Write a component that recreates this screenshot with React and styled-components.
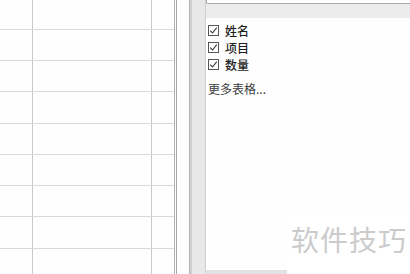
import React from "react";
import styled, { createGlobalStyle } from "styled-components";

const Global = createGlobalStyle`
  html, body { margin: 0; padding: 0; background: #ffffff; }
  body { width: 410px; height: 274px; overflow: hidden; font-family: "Noto Sans CJK SC", "Noto Sans", sans-serif; }
`;

const Page = styled.div`
  position: relative;
  display: flex;
  width: 410px;
  height: 274px;
  overflow: hidden;
  background: #ffffff;
`;

const Sheet = styled.div`
  display: flex;
  flex-direction: column;
  width: 174px;
  flex: none;
  background: #fefefe;
`;

const Row = styled.div`
  display: flex;
  flex: none;
  height: ${(p) => p.$h}px;
  border-bottom: 1px solid #d9d9d9;
`;

const Cell = styled.div`
  flex: none;
  width: ${(p) => p.$w}px;
  border-right: ${(p) => (p.$last ? "none" : "1px solid #c9c9c9")};
`;

const Gutter = styled.div`
  display: flex;
  flex: none;
  width: 31px;
  height: 100%;
`;

const Line = styled.div`
  flex: none;
  width: ${(p) => p.$w}px;
  background: ${(p) => p.$c};
`;

const Panel = styled.div`
  display: flex;
  flex-direction: column;
  flex: 1;
  height: 270px;
  border-left: 1px solid #cfcfcf;
  border-bottom: 4px solid #e2e2e2;
  background: #fefeff;
`;

const InputEdge = styled.div`
  flex: none;
  height: 3px;
  background: #ffffff;
  border-bottom: 1px solid #a8a8a8;
  border-left: 1px solid #a8a8a8;
  border-bottom-left-radius: 2px;
`;

const Strip = styled.div`
  flex: none;
  height: 14px;
  background: #ececec;
`;

const Content = styled.div`
  display: flex;
  flex-direction: column;
  padding: 4px 0 0 2px;
`;

const CheckRow = styled.label`
  display: flex;
  align-items: center;
  gap: 6px;
  height: 17px;
  font-size: 12px;
  font-weight: 500;
  line-height: 17px;
  color: #1f1f1f;
`;

const Box = styled.span`
  display: flex;
  align-items: center;
  justify-content: center;
  width: 9px;
  height: 9px;
  border: 1px solid #555555;
  background: #ffffff;
  flex: none;
`;

const More = styled.div`
  margin-top: 8px;
  font-size: 12px;
  line-height: 16px;
  color: #3c3c3c;
`;

const Watermark = styled.div`
  position: absolute;
  left: 287px;
  top: 212px;
  width: 123px;
  height: 62px;
  background: #ffffff;
  display: flex;
  align-items: flex-start;
  padding: 10px 0 0 4px;
  box-sizing: border-box;
  font-family: "Noto Sans CJK SC", sans-serif;
  font-size: 28px;
  line-height: 34px;
  letter-spacing: 1px;
  color: #cbcbcb;
  white-space: nowrap;
`;

const Check = () => (
  <svg width="9" height="9" viewBox="0 0 9 9">
    <path d="M1.2 4.6 L3.5 7 L7.8 1.6" fill="none" stroke="#3c3c3c" strokeWidth="1.1" />
  </svg>
);

const rowHeights = [29, 30, 30, 31, 30, 30, 30, 31, 30];
const cols = [32, 118, 22];

export default function App() {
  return (
    <Page>
      <Global />
      <Sheet>
        {rowHeights.map((h, i) => (
          <Row key={i} $h={h}>
            {cols.map((w, j) => (
              <Cell key={j} $w={w} $last={j === cols.length - 1} />
            ))}
          </Row>
        ))}
      </Sheet>
      <Gutter>
        <Line $w={1} $c="#b0b0b0" />
        <Line $w={1} $c="#ffffff" />
        <Line $w={1} $c="#a6a6a6" />
        <Line $w={12} $c="#fefefe" />
        <Line $w={1} $c="#b4b4b4" />
        <Line $w={2} $c="#d0d0d0" />
        <Line $w={13} $c="#e8e8e8" />
      </Gutter>
      <Panel>
        <InputEdge />
        <Strip />
        <Content>
          {["姓名", "项目", "数量"].map((t) => (
            <CheckRow key={t}>
              <Box>
                <Check />
              </Box>
              {t}
            </CheckRow>
          ))}
          <More>更多表格...</More>
        </Content>
      </Panel>
      <Watermark>软件技巧</Watermark>
    </Page>
  );
}
